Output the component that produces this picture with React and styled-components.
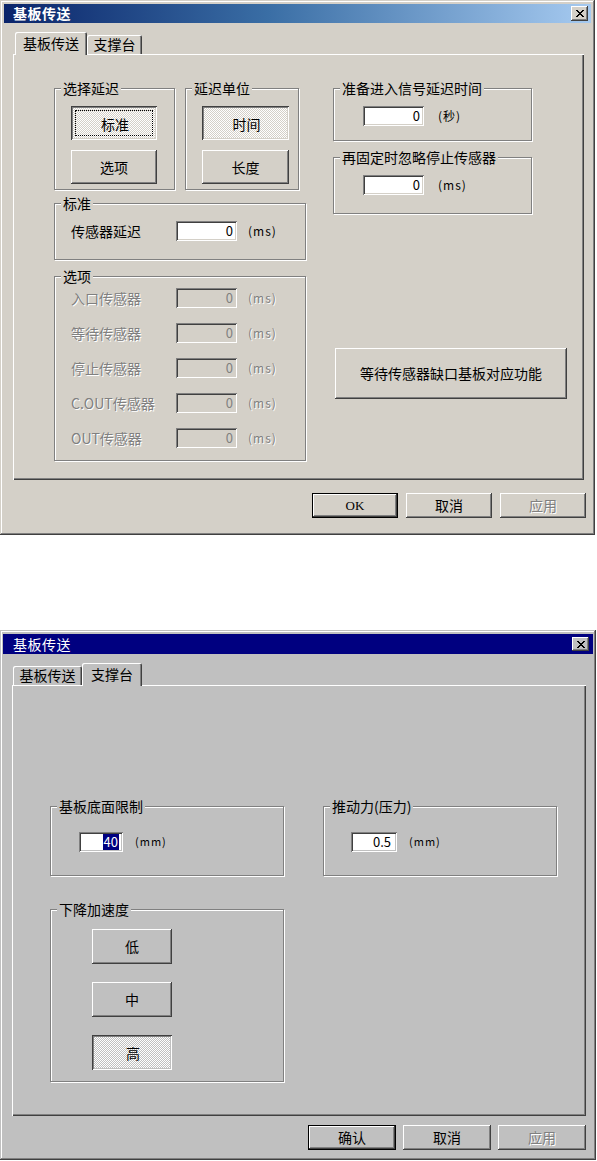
import React from 'react';
import styled, { createGlobalStyle, css } from 'styled-components';

const GlobalStyle = createGlobalStyle`
  html, body {
    margin: 0;
    padding: 0;
    background: #fff;
  }
  body {
    font-family: "Noto Sans CJK SC", "Liberation Sans", sans-serif;
    font-size: 14px;
    line-height: 1.2;
    color: #000;
  }
  * {
    box-sizing: border-box;
  }
`;

const raised = css`
  box-shadow: inset -1px -1px #404040, inset 1px 1px #fff, inset -2px -2px #808080, inset 2px 2px var(--face);
`;

const sunken = css`
  box-shadow: inset 1px 1px #808080, inset -1px -1px #fff, inset 2px 2px #404040, inset -2px -2px var(--face);
`;

const Page = styled.div`
  display: flex;
  flex-direction: column;
  width: 597px;
  height: 1161px;
  overflow: hidden;
`;

const Window = styled.div`
  --face: ${p => p.$face};
  display: flex;
  flex-direction: column;
  width: ${p => p.$w}px;
  height: ${p => p.$h}px;
  margin-top: ${p => p.$mt || 0}px;
  padding: ${p => p.$pad};
  background: var(--face);
  box-shadow: inset -1px -1px #404040, inset 1px 1px var(--face), inset -2px -2px #808080, inset 2px 2px #fff;
`;

const TitleBar = styled.div`
  display: flex;
  align-items: center;
  justify-content: space-between;
  flex-shrink: 0;
  height: ${p => p.$h}px;
  padding: 0 ${p => p.$pr}px 0 ${p => p.$pl}px;
  background: ${p => (p.$gradient ? 'linear-gradient(90deg, #0a246a 0%, #3a6ea5 45%, #a6caf0 100%)' : '#000080')};
  color: #fff;
  font-size: 14px;
  font-weight: ${p => (p.$bold ? 700 : 400)};
  letter-spacing: 0.5px;
`;

const CloseBox = styled.div`
  display: flex;
  align-items: center;
  justify-content: center;
  width: ${p => p.$w}px;
  height: ${p => p.$h}px;
  background: var(--face);
  ${raised}
`;

const TabArea = styled.div`
  display: flex;
  flex-direction: column;
  margin: 9px 0 0 ${p => p.$ml}px;
`;

const TabStrip = styled.div`
  display: flex;
  align-items: flex-end;
  height: 22px;
  padding-left: ${p => p.$pl}px;
`;

const Tab = styled.div`
  position: relative;
  z-index: ${p => (p.$active ? 1 : 0)};
  display: flex;
  align-items: center;
  justify-content: center;
  width: ${p => p.$w}px;
  height: ${p => (p.$active ? 23 : 19)}px;
  margin-bottom: ${p => (p.$active ? -1 : 0)}px;
  background: var(--face);
  border-radius: 2px 2px 0 0;
  box-shadow: inset 1px 1px #fff, inset -1px 0 #404040, inset -2px 0 #808080;
  font-size: 14px;
`;

const Panel = styled.div`
  display: flex;
  flex-direction: ${p => p.$dir || 'row'};
  align-items: flex-start;
  gap: ${p => p.$gap || 0}px;
  width: ${p => p.$w}px;
  height: ${p => p.$h}px;
  padding: ${p => p.$pad};
  background: var(--face);
  box-shadow: inset 1px 1px #fff, inset -1px -1px #404040, inset -2px -2px #808080;
`;

const Column = styled.div`
  display: flex;
  flex-direction: column;
  width: ${p => p.$w}px;
`;

const Row = styled.div`
  display: flex;
  gap: ${p => p.$gap || 0}px;
`;

const Group = styled.div`
  position: relative;
  display: flex;
  flex-direction: column;
  align-items: flex-start;
  gap: ${p => p.$gap || 0}px;
  width: ${p => p.$w}px;
  height: ${p => p.$h}px;
  margin-top: ${p => p.$mt || 0}px;
  padding: ${p => p.$pad};
  border: 1px solid #808080;
  box-shadow: inset 1px 1px #fff, 1px 1px #fff;
`;

const Legend = styled.span`
  position: absolute;
  top: -9px;
  left: 6px;
  padding: 0 2px;
  background: var(--face);
  font-size: 14px;
  line-height: 16px;
  white-space: nowrap;
`;

const FieldRow = styled.div`
  display: flex;
  align-items: center;
  height: 20px;
`;

const Label = styled.span`
  width: ${p => p.$w}px;
  font-size: 14px;
  white-space: nowrap;
  color: ${p => (p.$disabled ? '#808080' : '#000')};
  text-shadow: ${p => (p.$disabled ? '1px 1px #fff' : 'none')};
`;

const Field = styled.div`
  display: flex;
  align-items: center;
  justify-content: flex-end;
  width: ${p => p.$w}px;
  height: 20px;
  padding: 2px ${p => p.$pr || 4}px 2px 2px;
  background: ${p => (p.$disabled ? 'var(--face)' : '#fff')};
  color: ${p => (p.$disabled ? '#808080' : '#000')};
  font-size: 13px;
  ${sunken}
`;

const Selection = styled.span`
  display: flex;
  align-items: center;
  height: 16px;
  padding: 0 1px;
  background: #000080;
  color: #fff;
`;

const Unit = styled.span`
  margin-left: ${p => p.$ml}px;
  font-size: ${p => p.$size || 12}px;
  letter-spacing: 1px;
  white-space: nowrap;
  color: ${p => (p.$disabled ? '#808080' : '#000')};
  text-shadow: ${p => (p.$disabled ? '1px 1px #fff' : 'none')};
`;

const Button = styled.div`
  position: relative;
  display: flex;
  align-items: center;
  justify-content: center;
  flex-shrink: 0;
  width: ${p => p.$w}px;
  height: ${p => p.$h}px;
  margin: ${p => p.$m || 0};
  background: var(--face);
  font-size: 14px;
  color: ${p => (p.$disabled ? '#808080' : '#000')};
  text-shadow: ${p => (p.$disabled ? '1px 1px #fff' : 'none')};
  ${raised}
  ${p => p.$default && css`
    box-shadow: inset 0 0 0 1px #000, inset -2px -2px #404040, inset 2px 2px #fff, inset -3px -3px #808080;
  `}
  ${p => p.$pressed && css`
    padding: 2px 0 0 2px;
    background: conic-gradient(#fff 0 25%, var(--face) 0 50%, #fff 0 75%, var(--face) 0) 0 0 / 2px 2px;
    box-shadow: inset 1px 1px #404040, inset -1px -1px #fff, inset 2px 2px #808080, inset -2px -2px var(--face);
  `}
  ${p => p.$focus && css`
    &::after {
      content: '';
      position: absolute;
      inset: 4px;
      border: 1px dotted #000;
    }
  `}
`;

const Latin = styled.span`
  font-family: "Liberation Serif", serif;
  font-size: 13px;
`;

const ButtonRow = styled.div`
  display: flex;
  justify-content: flex-end;
  gap: ${p => p.$gap}px;
  margin-top: ${p => p.$mt}px;
  padding-right: ${p => p.$pr}px;
`;

const xCells = [[0, 6], [1, 5], [2, 4], [3], [2, 4], [1, 5], [0, 6]];
const xPath = xCells
  .map((xs, y) => xs.map(x => `M${x} ${y}h2v1h-2z`).join(''))
  .join('');

const CloseIcon = () => (
  <svg width="8" height="7" viewBox="0 0 8 7" shapeRendering="crispEdges">
    <path d={xPath} fill="#000" />
  </svg>
);

const SensorRow = ({ label, disabled }) => (
  <FieldRow>
    <Label $w={105} $disabled={disabled}>{label}</Label>
    <Field $w={61} $disabled={disabled}>0</Field>
    <Unit $ml={11} $disabled={disabled}>(ms)</Unit>
  </FieldRow>
);

const TransferDialog = () => (
  <Window $face="#d4d0c8" $w={595} $h={535} $pad="4px">
    <TitleBar $h={19} $pl={9} $pr={3} $gradient $bold>
      基板传送
      <CloseBox $w={17} $h={15}>
        <CloseIcon />
      </CloseBox>
    </TitleBar>

    <TabArea $ml={9}>
      <TabStrip $pl={2}>
        <Tab $active $w={72}>基板传送</Tab>
        <Tab $w={55}>支撑台</Tab>
      </TabStrip>

      <Panel $w={571} $h={426} $pad="34px 0 0 41px" $gap={27}>
        <Column $w={252}>
          <Row $gap={10}>
            <Group $w={121} $h={102} $pad="17px 0 0 16px" $gap={10}>
              <Legend>选择延迟</Legend>
              <Button $w={86} $h={34} $pressed $focus>标准</Button>
              <Button $w={86} $h={34}>选项</Button>
            </Group>
            <Group $w={114} $h={102} $pad="17px 0 0 16px" $gap={10}>
              <Legend>延迟单位</Legend>
              <Button $w={87} $h={34} $pressed>时间</Button>
              <Button $w={87} $h={34}>长度</Button>
            </Group>
          </Row>

          <Group $w={252} $h={57} $mt={13} $pad="17px 0 0 16px">
            <Legend>标准</Legend>
            <SensorRow label="传感器延迟" />
          </Group>

          <Group $w={252} $h={185} $mt={16} $pad="11px 0 0 16px" $gap={15}>
            <Legend>选项</Legend>
            <SensorRow label="入口传感器" disabled />
            <SensorRow label="等待传感器" disabled />
            <SensorRow label="停止传感器" disabled />
            <SensorRow label="C.OUT传感器" disabled />
            <SensorRow label="OUT传感器" disabled />
          </Group>
        </Column>

        <Column $w={234}>
          <Group $w={199} $h={53} $pad="17px 0 0 29px">
            <Legend>准备进入信号延迟时间</Legend>
            <FieldRow>
              <Field $w={61}>0</Field>
              <Unit $ml={14}>(秒)</Unit>
            </FieldRow>
          </Group>
          <Group $w={199} $h={57} $mt={16} $pad="17px 0 0 29px">
            <Legend>再固定时忽略停止传感器</Legend>
            <FieldRow>
              <Field $w={61}>0</Field>
              <Unit $ml={14}>(ms)</Unit>
            </FieldRow>
          </Group>
          <Button $w={232} $h={51} $m="134px 0 0 2px">等待传感器缺口基板对应功能</Button>
        </Column>
      </Panel>
    </TabArea>

    <ButtonRow $gap={8} $mt={13} $pr={5}>
      <Button $w={86} $h={25} $default><Latin>OK</Latin></Button>
      <Button $w={86} $h={25}>取消</Button>
      <Button $w={86} $h={25} $disabled>应用</Button>
    </ButtonRow>
  </Window>
);

const SupportDialog = () => (
  <Window $face="#c0c0c0" $w={596} $h={530} $mt={95} $pad="4px 3px">
    <TitleBar $h={20} $pl={10} $pr={4}>
      基板传送
      <CloseBox $w={17} $h={14}>
        <CloseIcon />
      </CloseBox>
    </TitleBar>

    <TabArea $ml={9}>
      <TabStrip $pl={1}>
        <Tab $w={69}>基板传送</Tab>
        <Tab $active $w={60}>支撑台</Tab>
      </TabStrip>

      <Panel $dir="column" $w={574} $h={431} $pad="121px 0 0 38px">
        <Row $gap={39}>
          <Group $w={234} $h={70} $pad="25px 0 0 28px">
            <Legend>基板底面限制</Legend>
            <FieldRow>
              <Field $w={44} $pr={4}><Selection>40</Selection></Field>
              <Unit $ml={12} $size={11}>(mm)</Unit>
            </FieldRow>
          </Group>
          <Group $w={234} $h={70} $pad="25px 0 0 27px">
            <Legend>推动力(压力)</Legend>
            <FieldRow>
              <Field $w={46} $pr={6}>0.5</Field>
              <Unit $ml={12} $size={11}>(mm)</Unit>
            </FieldRow>
          </Group>
        </Row>

        <Group $w={234} $h={173} $mt={33} $pad="19px 0 0 41px" $gap={18}>
          <Legend>下降加速度</Legend>
          <Button $w={80} $h={35}>低</Button>
          <Button $w={80} $h={35}>中</Button>
          <Button $w={80} $h={35} $pressed>高</Button>
        </Group>
      </Panel>
    </TabArea>

    <ButtonRow $gap={7} $mt={9} $pr={7}>
      <Button $w={88} $h={25} $default>确认</Button>
      <Button $w={88} $h={25}>取消</Button>
      <Button $w={88} $h={25} $disabled>应用</Button>
    </ButtonRow>
  </Window>
);

const App = () => (
  <>
    <GlobalStyle />
    <Page>
      <TransferDialog />
      <SupportDialog />
    </Page>
  </>
);

export default App;
